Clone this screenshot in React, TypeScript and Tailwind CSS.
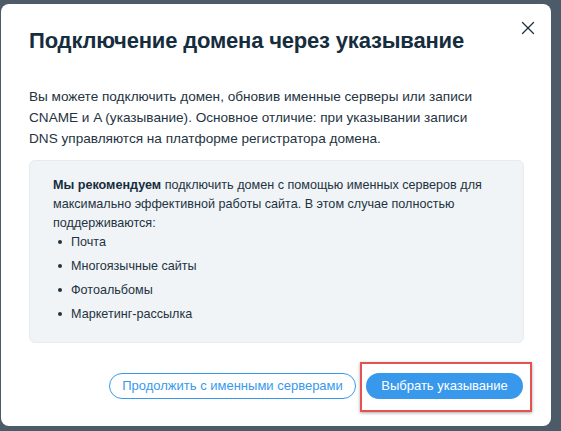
import { X } from 'lucide-react';

const items = ['Почта', 'Многоязычные сайты', 'Фотоальбомы', 'Маркетинг-рассылка'];

export default function App() {
  return (
    <div className="w-[561px] h-[431px] bg-[#4d5a67] pt-[4px] pl-[1px] overflow-hidden"
      style={{ fontFamily: '"Liberation Sans", Arial, sans-serif' }}>
      <div className="relative w-[550px] h-[422px] bg-white rounded-lg px-[28px] pt-[22px]">
        <button className="absolute right-[12px] top-[13px] text-[#20303c]">
          <X size={22} strokeWidth={1.4} />
        </button>

        <h1 className="text-[22px] leading-[30px] font-bold text-[#162d3d] tracking-[-0.18px]">
          Подключение домена через указывание
        </h1>

        <p className="mt-[30px] max-w-[452px] text-[13.6px] leading-[21px] text-[#24333f]">
          Вы можете подключить домен, обновив именные серверы или записи CNAME и A (указывание).
          Основное отличие: при указывании записи DNS управляются на платформе регистратора домена.
        </p>

        {/* Рекомендация */}
        <div className="mt-[11px] w-[495px] h-[183px] bg-[#f0f4f7] border border-[#e6ebef] rounded-md pl-[23px] pr-[20px] pt-[15px]">
          <p className="text-[12.6px] leading-[19px] text-[#24333f]">
            <span className="font-bold text-[#162d3d]">Мы рекомендуем</span> подключить домен с помощью
            именных серверов для максимально эффективной работы сайта. В этом случае полностью
            поддерживаются:
          </p>
          <ul className="mt-[-3px]">
            {items.map((it) => (
              <li key={it} className="flex items-center h-[24px] text-[12.6px] text-[#24333f]">
                <span className="w-[4px] h-[4px] rounded-full bg-[#24333f] ml-[5px] mr-[9px]" />
                {it}
              </li>
            ))}
          </ul>
        </div>

        {/* Кнопки */}
        <div className="mt-[30px] flex justify-end items-center gap-[10px]">
          <button className="h-[26px] w-[247px] rounded-full border border-[#3899ec] text-[#3899ec] text-[13px]">
            Продолжить с именными серверами
          </button>
          <div className="relative">
            <span className="absolute left-[-6px] right-[-9px] top-[-11px] bottom-[-13px] border-2 border-[#e4534f] shadow-[0_1px_3px_rgba(0,0,0,0.35)]" />
            <button className="relative h-[26px] w-[157px] rounded-full bg-[#3899ec] text-white text-[13px]">
              Выбрать указывание
            </button>
          </div>
        </div>
      </div>
    </div>
  );
}
